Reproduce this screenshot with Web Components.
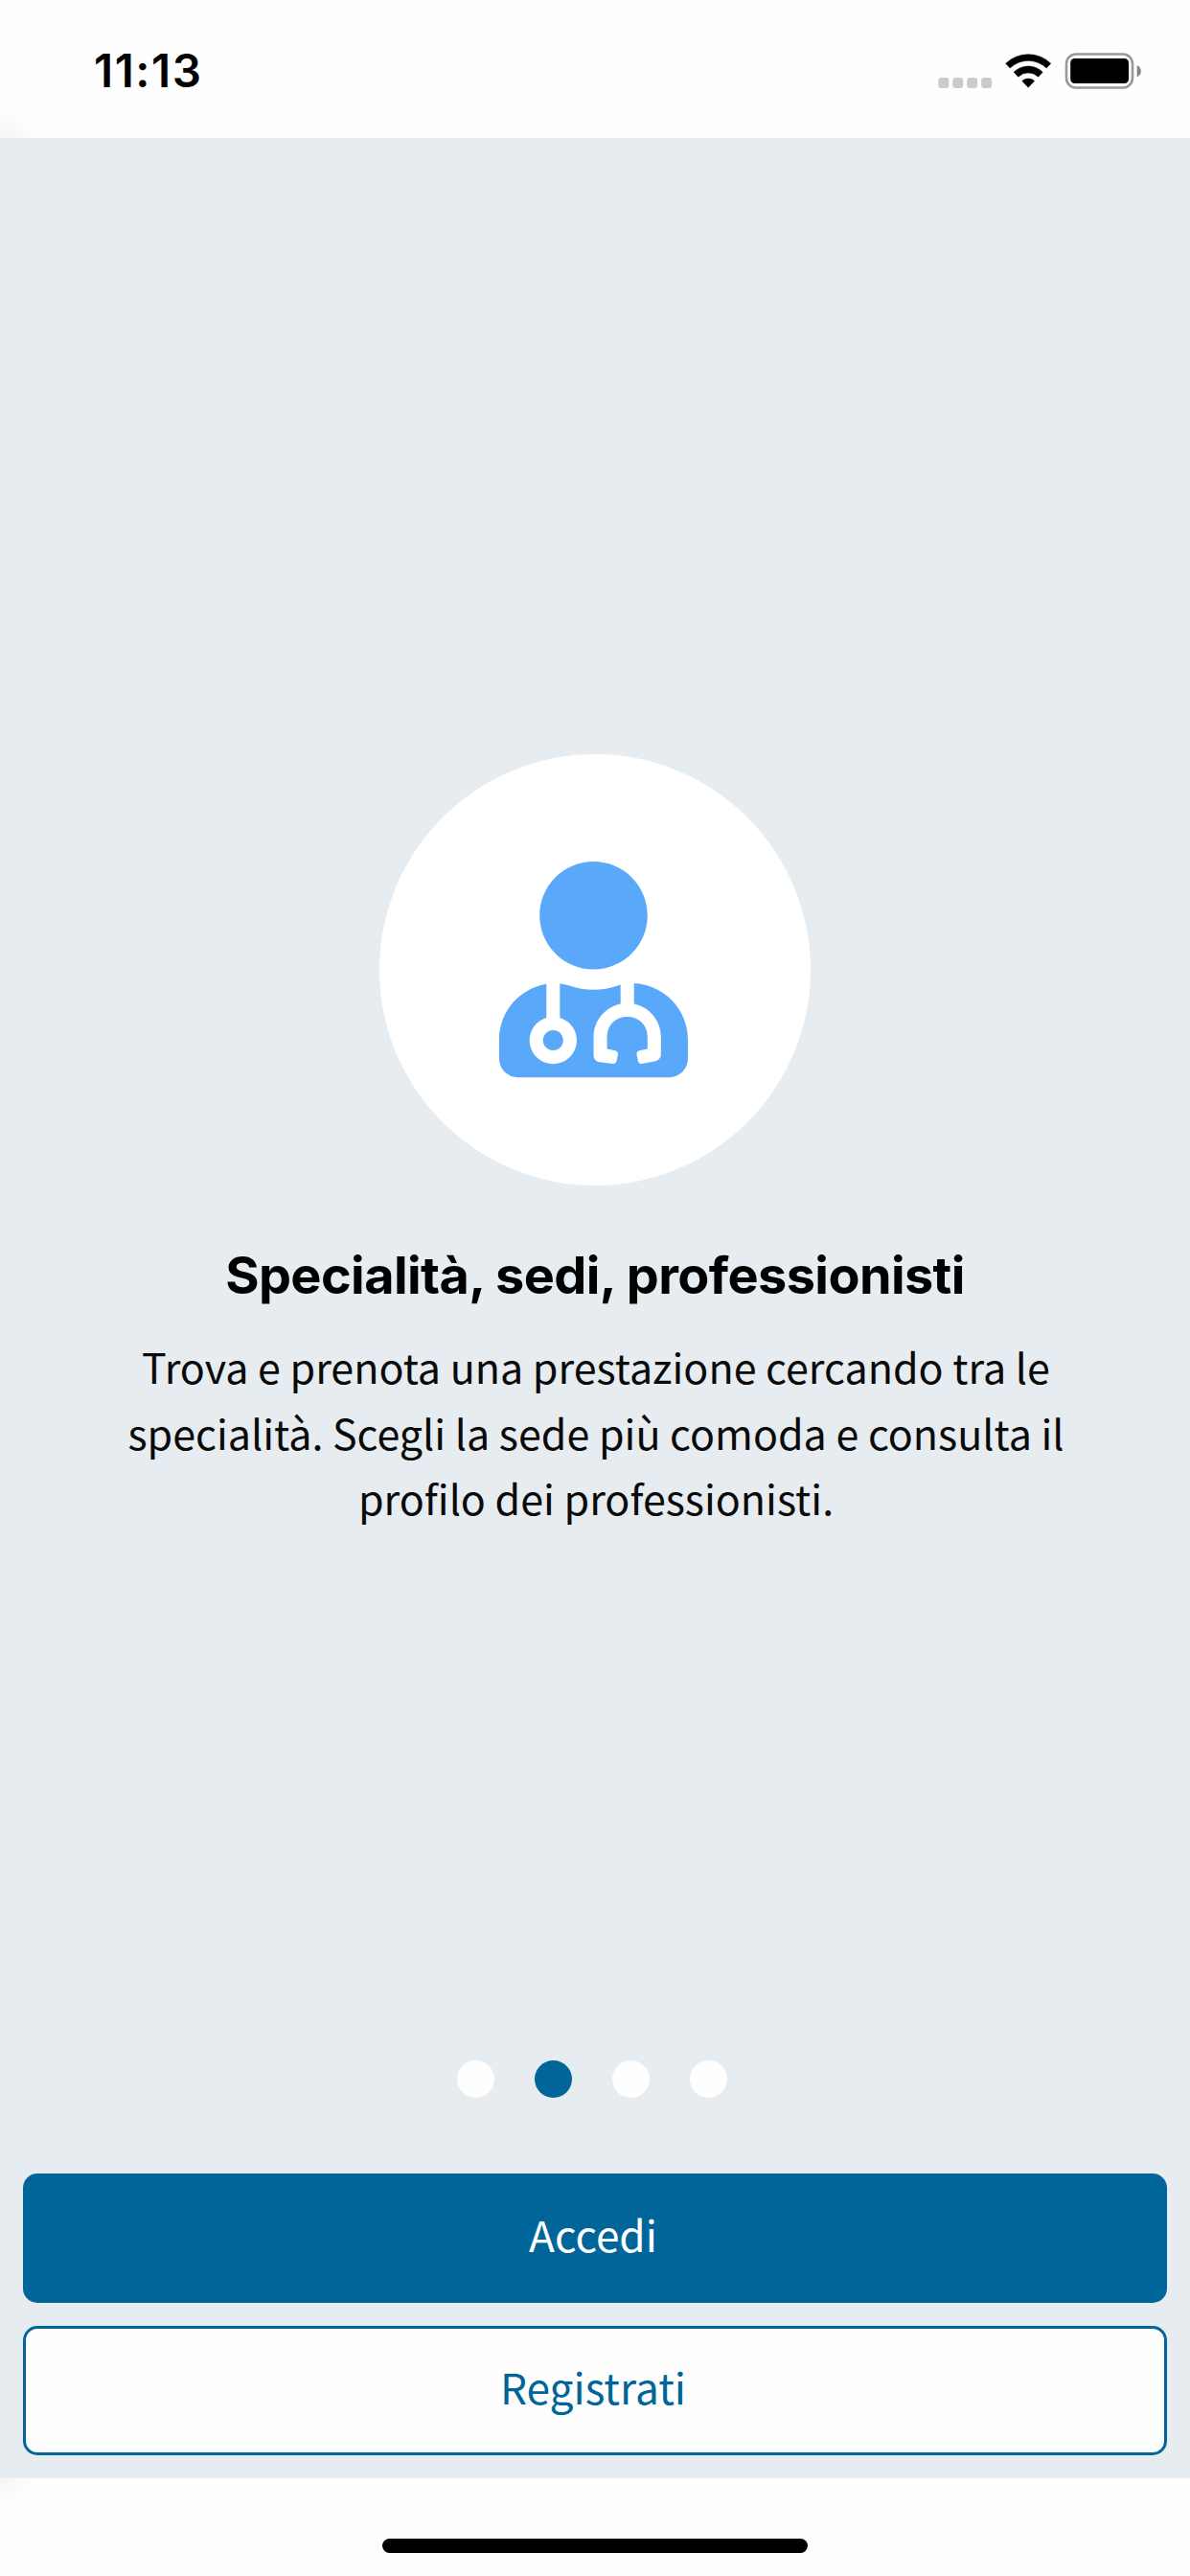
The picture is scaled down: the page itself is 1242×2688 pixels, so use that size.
<!DOCTYPE html>
<html lang="it">
<head>
<meta charset="utf-8">
<title>Specialità, sedi, professionisti</title>
<style>
html, body { margin: 0; padding: 0; background: #fefefe; }
</style>
</head>
<body>
<onboarding-screen></onboarding-screen>
<script>
const define = (name, html) => customElements.define(name, class extends HTMLElement {
  constructor() {
    super();
    this.attachShadow({ mode: 'open' }).innerHTML = html;
  }
});

define('status-bar', `
<style>
:host { display: flex; height: 144px; box-sizing: border-box; justify-content: space-between; align-items: flex-start;
  background: radial-gradient(circle 38px at 0 152px, #f3f3f3, #fefefe) #fefefe; }
.time { font: 600 47.5px/56px Inter, sans-serif; color: #000; margin: 46px 0 0 98px; letter-spacing: 1.6px; }
svg { display: block; margin: 50px 47px 0 0; }
</style>
<div class="time">11:13</div>
<svg width="216" height="46" viewBox="979 50 216 46">
  <g fill="#cbcbcb">
    <rect x="979.3" y="81" width="11" height="11" rx="3"/><rect x="994.3" y="81" width="11" height="11" rx="3"/>
    <rect x="1009.2" y="81" width="11" height="11" rx="3"/><rect x="1024.2" y="81" width="11" height="11" rx="3"/>
  </g>
  <g fill="#000">
    <path d="M1049.7 66.2A34 34 0 0 1 1096.7 66.2L1092.2 71A27.4 27.4 0 0 0 1054.2 71Z" stroke="#000" stroke-width=".6" stroke-linejoin="round"/>
    <path d="M1058.2 75.2A21.5 21.5 0 0 1 1088.2 75.2L1083.6 80.2A14.8 14.8 0 0 0 1062.8 80.2Z" stroke="#000" stroke-width=".6" stroke-linejoin="round"/>
    <path d="M1066.8 84.5A9.6 9.6 0 0 1 1079.6 84.5L1073.2 91.2Z" stroke="#000" stroke-width=".6" stroke-linejoin="round"/>
  </g>
  <rect x="1113" y="56.5" width="69" height="35" rx="10" fill="none" stroke="#999" stroke-width="2.6"/>
  <rect x="1117.2" y="61" width="60.8" height="26" rx="4.5" fill="#000"/>
  <path d="M1186.7 68.2C1192.3 70.6 1192.3 77.8 1186.7 80.2Z" fill="#868686"/>
</svg>`);

define('slide-badge', `
<style>
:host { display: flex; width: 450px; height: 450px; border-radius: 50%; background: #fff; align-items: center; justify-content: center; }
svg { display: block; margin-right: 4px; }
</style>
<svg width="197" height="225.2" viewBox="0 0 448 512"><path fill="#5aa8fa" d="M224 256c70.7 0 128-57.3 128-128S294.7 0 224 0 96 57.3 96 128s57.3 128 128 128zM104 424c0 13.3 10.7 24 24 24s24-10.7 24-24-10.7-24-24-24-24 10.7-24 24zm216-135.4v49c36.5 7.4 64 39.8 64 78.4v41.7c0 7.6-5.4 14.2-12.9 15.7l-32.2 6.4c-4.3.9-8.5-1.9-9.4-6.3l-3.1-15.7c-.9-4.3 1.9-8.6 6.3-9.4l19.3-3.9V416c0-62.8-96-65.1-96 1.9v26.7l19.3 3.9c4.3.9 7.1 5.1 6.3 9.4l-3.1 15.7c-.9 4.3-5.1 7.1-9.4 6.3l-31.2-4.2c-7.9-1.1-13.8-7.8-13.8-15.9V416c0-38.6 27.5-70.9 64-78.4v-45.2c-2.2.7-4.4 1.1-6.6 1.9-18 6.3-37.3 9.8-57.4 9.8s-39.4-3.5-57.4-9.8c-7.4-2.6-14.9-4.2-22.6-5.2v81.6c23.1 6.9 40 28.1 40 53.4 0 30.9-25.1 56-56 56s-56-25.1-56-56c0-25.3 16.9-46.5 40-53.4v-80.4C48.5 301 0 355.8 0 422.4v44.8C0 491.9 20.1 512 44.8 512h358.4c24.7 0 44.8-20.1 44.8-44.8v-44.8c0-72-56.8-130.3-128-133.8z"/></svg>`);

define('slide-text', `
<style>
:host { display: flex; flex-direction: column; align-items: center; }
h1 { margin: 0; font: 700 54px/66px Inter, sans-serif; letter-spacing: -.6px; color: #000; white-space: nowrap; }
p { margin: 27px 0 0; padding-left: 2px; font: 400 43px/68.5px "Noto Sans CJK JP", sans-serif; color: #0a0a0a; text-align: center; white-space: nowrap; }
</style>
<h1><slot name="title"></slot></h1>
<p><slot></slot></p>`);

define('page-dots', `
<style>
:host { display: flex; gap: 42px; }
i { width: 39px; height: 39px; border-radius: 50%; background: #fefefe; }
i.on { background: #006699; }
</style>
<i></i><i class="on"></i><i></i><i></i>`);

define('action-button', `
<style>
:host { display: flex; height: 135px; box-sizing: border-box; align-items: center; justify-content: center; padding: 0 4px 10px 0;
  border: 3px solid #006699; border-radius: 15px; background: #006699; color: #fff; font: 400 44.2px/70px "Noto Sans CJK JP", sans-serif; }
:host([outline]) { background: #fefefe; color: #006699; }
</style>
<slot></slot>`);

define('home-indicator', `
<style>
:host { display: flex; height: 102px; box-sizing: border-box; justify-content: center; padding-top: 63px;
  background: radial-gradient(circle 38px at 0 -8px, #f3f3f3, #fefefe) #fefefe; }
i { width: 444px; height: 15px; border-radius: 8px; background: #000; }
</style>
<i></i>`);

define('onboarding-screen', `
<style>
:host { display: flex; flex-direction: column; width: 1242px; height: 2688px; overflow: hidden; }
main { flex: 1; display: flex; flex-direction: column; align-items: center; box-sizing: border-box; padding: 643px 24px 24px; background: #e6ecf0; }
slide-text { margin-top: 61px; }
page-dots { margin: auto 6px 79.5px 0; }
nav { align-self: stretch; display: flex; flex-direction: column; gap: 24px; }
</style>
<status-bar></status-bar>
<main>
  <slide-badge></slide-badge>
  <slide-text><span slot="title">Specialità, sedi, professionisti</span>Trova e prenota una prestazione cercando tra le<br>specialità. Scegli la sede più comoda e consulta il<br>profilo dei professionisti.</slide-text>
  <page-dots></page-dots>
  <nav>
    <action-button>Accedi</action-button>
    <action-button outline>Registrati</action-button>
  </nav>
</main>
<home-indicator></home-indicator>`);
</script>
</body>
</html>
